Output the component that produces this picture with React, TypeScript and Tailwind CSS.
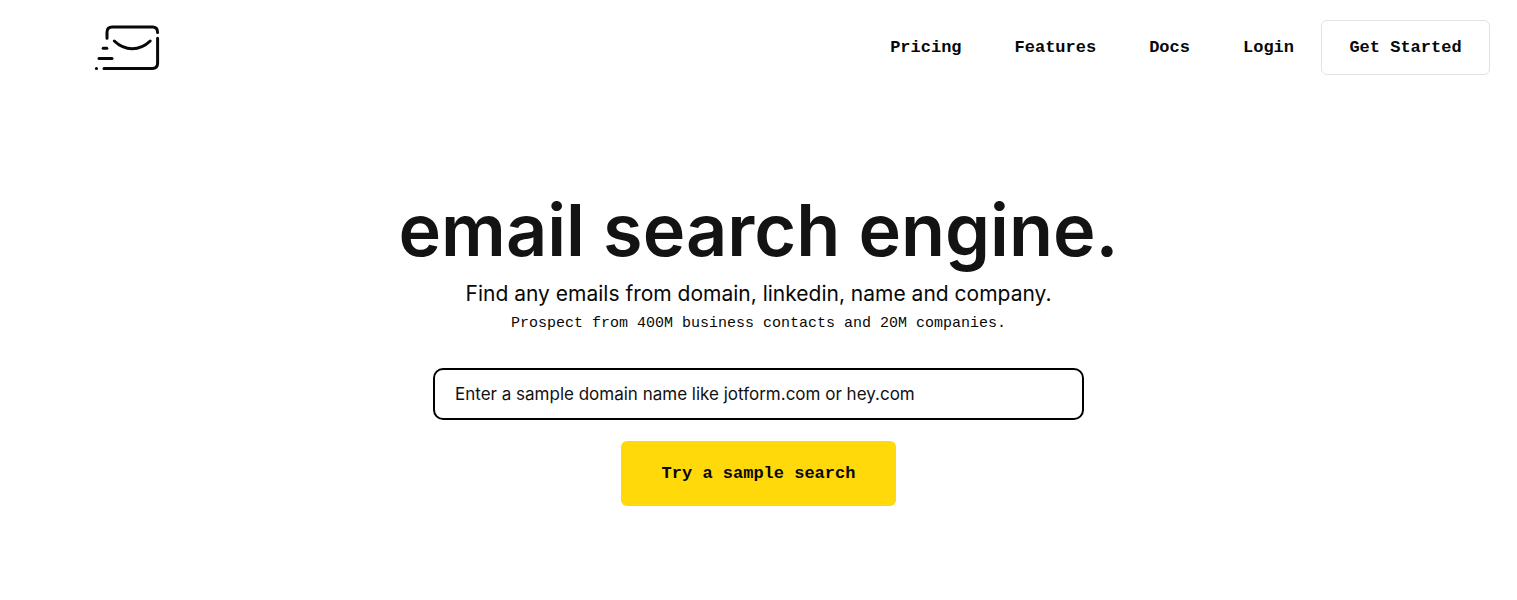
import { FormEvent, useState } from "react";

const navLinks = [
  { label: "Pricing", href: "#pricing" },
  { label: "Features", href: "#features" },
  { label: "Docs", href: "#docs" },
  { label: "Login", href: "#login" }
];

function Logo() {
  return (
    <svg
      className="h-12 w-[68px]"
      viewBox="0 0 68 48"
      fill="none"
      stroke="currentColor"
      strokeWidth="3"
      strokeLinecap="round"
      strokeLinejoin="round"
      aria-hidden="true"
    >
      <path d="M13 14.3V8.2Q13 3 18.2 3H58.5Q63.6 3 63.6 8.4" />
      <path d="M63.6 14.3V39.2Q63.6 44.4 58.4 44.4H10" />
      <path d="M20.3 17C31 27.3 45.5 27.3 56.2 17" />
      <path d="M9.2 24.2H12.8" />
      <path d="M5 34.4H18" />
      <path d="M2.4 44.4H2.5" />
    </svg>
  );
}

function Header() {
  return (
    <header className="flex items-center justify-between pt-5 pr-[27px] pl-[94px]">
      <a href="#home" aria-label="Home">
        <Logo />
      </a>
      <div className="flex items-center gap-[27px] font-['Liberation_Mono',monospace] text-[17px] font-bold">
        <nav className="flex gap-[53px]">
          {navLinks.map((link) => (
            <a key={link.label} href={link.href} className="hover:underline">
              {link.label}
            </a>
          ))}
        </nav>
        <button type="button" className="h-[55px] w-[169px] rounded-md border border-[#e3e3e3]">
          Get Started
        </button>
      </div>
    </header>
  );
}

function SearchForm() {
  const [domain, setDomain] = useState("");

  const handleSubmit = (event: FormEvent) => {
    event.preventDefault();
  };

  return (
    <form onSubmit={handleSubmit} className="mt-[30px] flex w-full max-w-[651px] flex-col items-center">
      <input
        type="text"
        aria-label="Domain name"
        value={domain}
        onChange={(event) => setDomain(event.target.value)}
        placeholder="Enter a sample domain name like jotform.com or hey.com"
        className="h-[52px] w-full rounded-[10px] border-2 border-black px-5 text-[17px] placeholder:text-[#111]"
      />
      <button
        type="submit"
        className="mt-[21px] h-[65px] w-[275px] rounded-md bg-[#ffd90a] font-['Liberation_Mono',monospace] text-[17px] font-bold"
      >
        Try a sample search
      </button>
    </form>
  );
}

export default function App() {
  return (
    <div className="min-h-screen bg-white font-['Inter',sans-serif] text-[#080808]">
      <Header />
      <main className="flex flex-col items-center px-6 pt-[111px] pb-16 text-center">
        <h1 className="text-[72px] leading-[88px] font-semibold text-[#131313]">email search engine.</h1>
        <p className="mt-1 text-[21px] leading-8">Find any emails from domain, linkedin, name and company.</p>
        <p className="font-['Liberation_Mono',monospace] text-[15px] leading-7">
          Prospect from 400M business contacts and 20M companies.
        </p>
        <SearchForm />
      </main>
    </div>
  );
}
